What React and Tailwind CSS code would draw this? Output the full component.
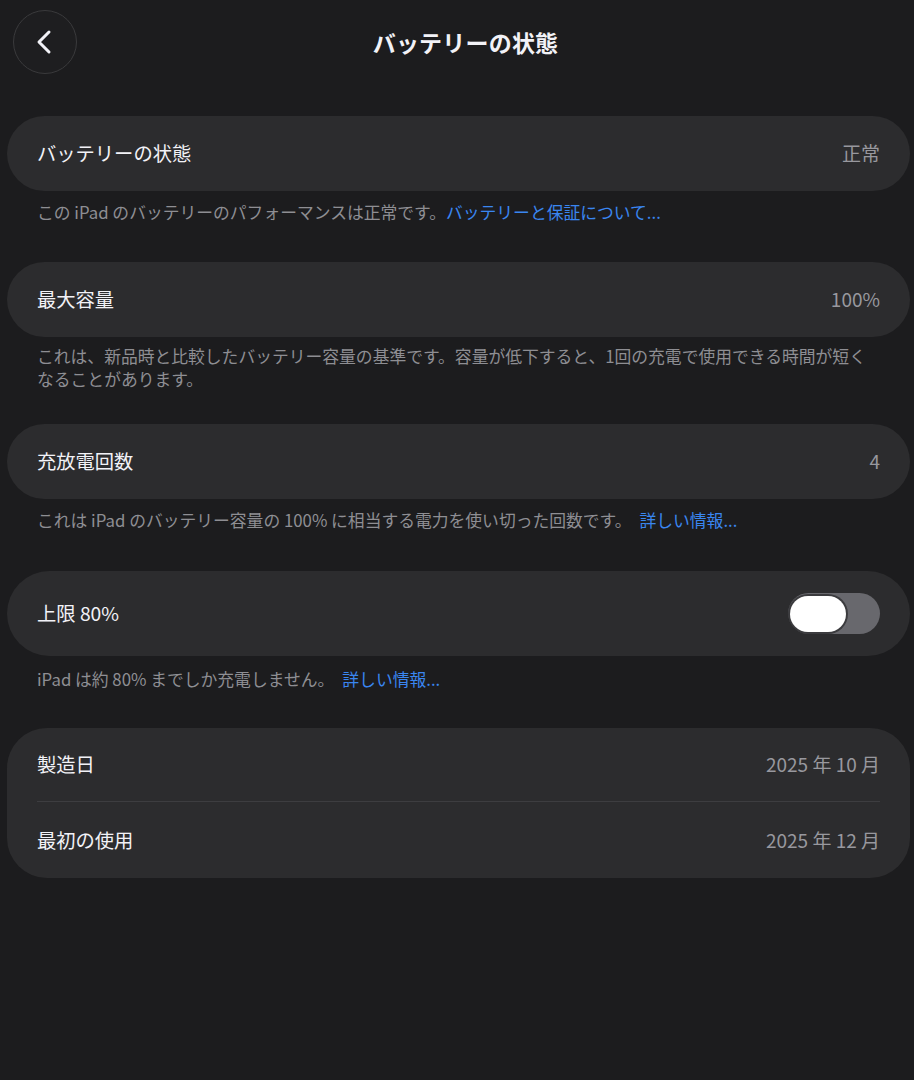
export default function App() {
  const font = { fontFamily: '"Noto Sans CJK JP", "Noto Sans", sans-serif' };

  return (
    <div className="min-h-[1080px] w-full bg-[#1c1c1e] text-[#f2f2f7]" style={font}>
      {/* Header */}
      <header className="grid grid-cols-[1fr_auto_1fr] items-center px-[13px] pt-[10px]">
        <button className="flex h-[64px] w-[64px] items-center justify-center rounded-full border border-[#3a3a3c] bg-[#1e1e20]">
          <svg width="22" height="26" viewBox="0 0 22 26" fill="none">
            <path d="M15 3 L5 13 L15 23" stroke="#f2f2f7" strokeWidth="3" strokeLinecap="round" strokeLinejoin="round" />
          </svg>
        </button>
        <h1 className="ml-[17px] text-[23px] font-bold leading-none tracking-[0.2px]">バッテリーの状態</h1>
        <div />
      </header>

      <main className="flex flex-col pl-[7px] pr-[4px] pt-[42px]">
        {/* Battery health */}
        <div className="flex h-[75px] items-center justify-between rounded-full bg-[#2c2c2e] px-[30px]">
          <span className="text-[19.3px]">バッテリーの状態</span>
          <span className="text-[19px] text-[#98989e]">正常</span>
        </div>
        <p className="mt-[10px] pl-[30px] pr-[34px] text-[16.8px] leading-[23px] text-[#8e8e93]">
          この iPad のバッテリーのパフォーマンスは正常です。
          <span className="text-[#3a86f0]">バッテリーと保証について...</span>
        </p>

        {/* Max capacity */}
        <div className="mt-[38px] flex h-[75px] items-center justify-between rounded-full bg-[#2c2c2e] px-[30px]">
          <span className="text-[19.3px]">最大容量</span>
          <span className="text-[19px] text-[#98989e]">100%</span>
        </div>
        <p className="mt-[8px] pl-[30px] pr-[34px] text-[16.8px] leading-[23px] text-[#8e8e93]">
          これは、新品時と比較したバッテリー容量の基準です。容量が低下すると、1回の充電で使用できる時間が短くなることがあります。
        </p>

        {/* Cycle count */}
        <div className="mt-[33px] flex h-[75px] items-center justify-between rounded-full bg-[#2c2c2e] px-[30px]">
          <span className="text-[19.3px]">充放電回数</span>
          <span className="text-[19px] text-[#98989e]">4</span>
        </div>
        <p className="mt-[10px] pl-[30px] pr-[34px] text-[16.8px] leading-[23px] text-[#8e8e93]">
          これは iPad のバッテリー容量の 100% に相当する電力を使い切った回数です。
          <span className="ml-[8px] text-[#3a86f0]">詳しい情報...</span>
        </p>

        {/* 80% limit */}
        <div className="mt-[39px] flex h-[85px] items-center justify-between rounded-full bg-[#2c2c2e] px-[30px]">
          <span className="text-[19.3px]">上限 80%</span>
          <div className="flex h-[41px] w-[92px] items-center rounded-full bg-[#68686d] px-[2px]">
            <div className="h-[36px] w-[56px] rounded-full bg-white shadow-[0_0_0_2px_rgba(30,30,32,0.6)]" />
          </div>
        </div>
        <p className="mt-[12px] pl-[30px] pr-[34px] text-[16.8px] leading-[23px] text-[#8e8e93]">
          iPad は約 80% までしか充電しません。
          <span className="ml-[8px] text-[#3a86f0]">詳しい情報...</span>
        </p>

        {/* Dates */}
        <div className="mt-[37px] flex flex-col rounded-[40px] bg-[#2c2c2e] px-[30px]">
          <div className="flex h-[74px] items-center justify-between border-b border-[#3d3d40]">
            <span className="text-[19.3px]">製造日</span>
            <span className="text-[19px] text-[#98989e]">2025 年 10 月</span>
          </div>
          <div className="flex h-[76px] items-center justify-between">
            <span className="text-[19.3px]">最初の使用</span>
            <span className="text-[19px] text-[#98989e]">2025 年 12 月</span>
          </div>
        </div>
      </main>
    </div>
  );
}
